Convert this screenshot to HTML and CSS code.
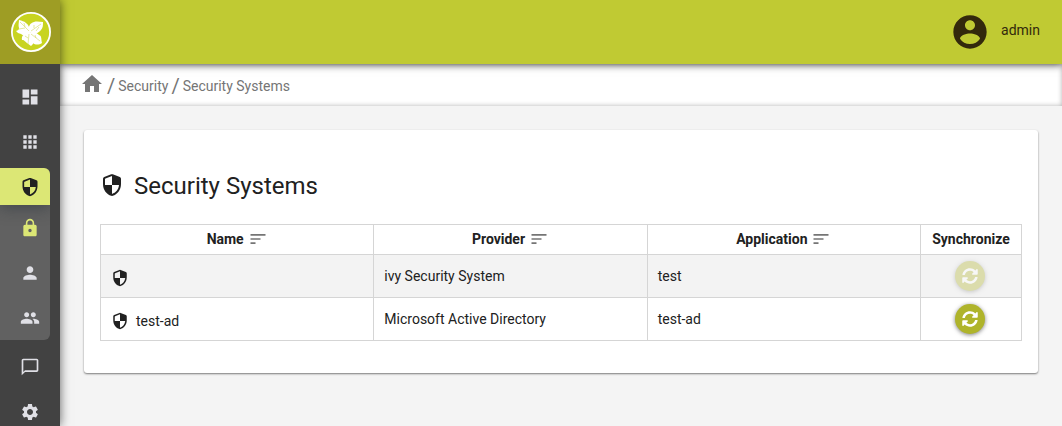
FILE: index.html
```html
<!DOCTYPE html>
<html lang="en">
<head>
<meta charset="utf-8">
<meta name="viewport" content="width=device-width, initial-scale=1">
<title>Security Systems</title>
<link rel="stylesheet" href="styles.css">
</head>
<body>
<svg class="sprite" aria-hidden="true">
  <symbol id="shield" viewBox="0 0 24 24"><path d="M11.200 1.300 4.200 4Q3 4.500 3 5.800V11c0 6 3.800 10.500 8.200 11.800q.8.300 1.600 0C17.200 21.500 21 17 21 11V5.800Q21 4.500 19.800 4L12.800 1.300q-.8-.3-1.600 0zM12 12h7c-.5 4.600-3.200 7.700-7 8.900V12H5V6.300q0-.5.500-.7L12 3.100z"/></symbol>
  <symbol id="sort" viewBox="0 0 24 24"><path d="M3 18h6v-2H3v2zM3 6v2h18V6H3zm0 7h12v-2H3v2z"/></symbol>
  <symbol id="sync" viewBox="0 0 512 512"><path d="M370.720 133.280C339.458 104.008 298.888 87.962 255.848 88c-77.458.068-144.328 53.178-162.791 126.850-1.344 5.363-6.122 9.150-11.651 9.150H24.103c-7.498 0-13.194-6.807-11.807-14.176C33.933 94.924 134.813 8 256 8c66.448 0 126.791 26.136 171.315 68.685L463.030 40.970C478.149 25.851 504 36.559 504 57.941V192c0 13.255-10.745 24-24 24H345.941c-21.382 0-32.090-25.851-16.971-40.971l41.750-41.749zM32 296h134.059c21.382 0 32.090 25.851 16.971 40.971l-41.750 41.750c31.262 29.273 71.835 45.319 114.876 45.280 77.418-.070 144.315-53.144 162.787-126.849 1.344-5.363 6.122-9.150 11.651-9.150h57.304c7.498 0 13.194 6.807 11.807 14.176C478.067 417.076 377.187 504 256 504c-66.448 0-126.791-26.136-171.315-68.685L48.970 471.030C33.851 486.149 8 475.441 8 454.059V320c0-13.255 10.745-24 24-24z"/></symbol>
</svg>
<div class="layout">
  <aside class="sidebar">
    <a class="logo" href="#" aria-label="Start page">
      <svg viewBox="0 0 40 40" aria-hidden="true">
        <circle cx="20" cy="20" r="19.100" fill="#c8d420" stroke="#fff" stroke-width="1.800"/>
        <g fill="#fff">
          <path d="M19 21C16 24 12 24 10 22c-1 0-2-1-3-1l-2-2c2-1 3-1 3-3-1-3 0-5 0-8 3 1 5 1 7 3 3 2 4 6 4 10z"/>
          <path d="M18 20c-1-6 1-9 5-10 3-1 6 0 9 0 0 3 0 6-2 8-3 4-8 5-12 2z"/>
          <path d="M19 21c2-1 7-1 9 2 3 1 2 4 3 8-3 2-7 2-9 0-3-2-4-6-3-10z"/>
          <path d="M20 21c-6 0-10 2-9 7 3 0 3 2 5 3l4 3c4-3 4-8 0-13z"/>
        </g>
        <path d="M9 10l9 9M8 17l6-1M13 11l1 4M20 19l10-7M23 13v3M25 19l3-4M20 22l9 7M24 23l1 3M18 22l-1 10M14 24l3 2" fill="none" stroke="#d8df75" stroke-width=".7"/>
      </svg>
    </a>
    <nav class="nav" aria-label="Main">
      <a class="nav-item" href="#" aria-label="Dashboard"><svg viewBox="0 0 24 24"><path d="M3 13h8V3H3v10zm0 8h8v-6H3v6zm10 0h8V11h-8v10zm0-18v6h8V3h-8z"/></svg></a>
      <a class="nav-item" href="#" aria-label="Applications"><svg viewBox="0 0 24 24"><path d="M4 8h4V4H4v4zm6 12h4v-4h-4v4zm-6 0h4v-4H4v4zm0-6h4v-4H4v4zm6 0h4v-4h-4v4zm6-10v4h4V4h-4zm-6 4h4V4h-4v4zm6 6h4v-4h-4v4zm0 6h4v-4h-4v4z"/></svg></a>
      <div class="group">
        <a class="nav-item active" href="#" aria-label="Security"><svg><use href="#shield"/></svg></a>
        <div class="submenu">
          <a class="nav-item current" href="#" aria-label="Security Systems"><svg viewBox="0 0 24 24"><path d="M18 8h-1V6c0-2.760-2.240-5-5-5S7 3.240 7 6v2H6c-1.100 0-2 .9-2 2v10c0 1.100.9 2 2 2h12c1.100 0 2-.9 2-2V10c0-1.100-.9-2-2-2zm-6 9c-1.100 0-2-.9-2-2s.9-2 2-2 2 .9 2 2-.9 2-2 2zm3.100-9H8.900V6c0-1.710 1.390-3.100 3.100-3.100s3.100 1.390 3.100 3.100v2z"/></svg></a>
          <a class="nav-item" href="#" aria-label="Users"><svg viewBox="0 0 24 24"><path d="M12 12c2.210 0 4-1.790 4-4s-1.790-4-4-4-4 1.790-4 4 1.790 4 4 4zm0 2c-2.670 0-8 1.340-8 4v2h16v-2c0-2.660-5.330-4-8-4z"/></svg></a>
          <a class="nav-item" href="#" aria-label="Roles"><svg viewBox="0 0 24 24"><path d="M16 11c1.660 0 2.990-1.340 2.990-3S17.660 5 16 5s-3 1.340-3 3 1.340 3 3 3zm-8 0c1.660 0 2.990-1.340 2.990-3S9.660 5 8 5 5 6.340 5 8s1.340 3 3 3zm0 2c-2.330 0-7 1.170-7 3.500V19h14v-2.500c0-2.330-4.670-3.500-7-3.500zm8 0c-.29 0-.62.020-.97.050 1.160.84 1.970 1.970 1.970 3.450V19h6v-2.500c0-2.330-4.670-3.500-7-3.500z"/></svg></a>
        </div>
      </div>
      <a class="nav-item" href="#" aria-label="Notifications"><svg viewBox="0 0 24 24"><path d="M20 2H4c-1.100 0-2 .9-2 2v18l4-4h14c1.100 0 2-.9 2-2V4c0-1.100-.9-2-2-2zm0 14H6l-2 2V4h16v12z"/></svg></a>
      <a class="nav-item" href="#" aria-label="System"><svg viewBox="0 0 24 24"><path d="M19.140 12.940c.04-.3.060-.61.060-.94 0-.32-.02-.64-.07-.94l2.030-1.580c.18-.14.230-.41.120-.61l-1.920-3.320c-.12-.22-.37-.29-.59-.22l-2.390.96c-.5-.38-1.030-.7-1.620-.94l-.36-2.540c-.04-.24-.24-.41-.48-.41h-3.840c-.24 0-.43.17-.47.41l-.36 2.540c-.59.24-1.130.57-1.620.94l-2.390-.96c-.22-.08-.47 0-.59.22L2.740 8.870c-.12.21-.08.47.12.610l2.030 1.580c-.05.3-.09.63-.09.94s.02.64.07.94l-2.030 1.580c-.18.14-.23.41-.12.610l1.920 3.320c.12.22.37.29.59.22l2.390-.96c.5.38 1.030.7 1.620.94l.36 2.540c.05.24.24.41.48.41h3.840c.24 0 .44-.17.470-.41l.36-2.540c.59-.24 1.130-.56 1.620-.94l2.390.96c.22.08.47 0 .59-.22l1.920-3.320c.12-.22.07-.47-.12-.61l-2.010-1.580zM12 15.600c-1.980 0-3.600-1.620-3.600-3.600s1.620-3.600 3.600-3.600 3.600 1.620 3.600 3.600-1.620 3.600-3.600 3.600z"/></svg></a>
    </nav>
  </aside>
  <div class="content">
    <header class="topbar">
      <a class="profile" href="#">
        <svg viewBox="0 0 24 24" aria-hidden="true"><path d="M12 2C6.480 2 2 6.480 2 12s4.480 10 10 10 10-4.480 10-10S17.520 2 12 2zm0 3c1.660 0 3 1.340 3 3s-1.340 3-3 3-3-1.340-3-3 1.340-3 3-3zm0 14.200c-2.500 0-4.710-1.280-6-3.220.03-1.990 4-3.080 6-3.080 1.990 0 5.970 1.090 6 3.080-1.290 1.940-3.500 3.220-6 3.220z"/></svg>
        <span>admin</span>
      </a>
    </header>
    <nav class="breadcrumb" aria-label="Breadcrumb">
      <a class="home" href="#" aria-label="Home"><svg viewBox="0 0 24 24"><path d="M10 20v-6h4v6h5v-8h3L12 3 2 12h3v8z"/></svg></a>
      <span class="slash">/</span>
      <a href="#">Security</a>
      <span class="slash">/</span>
      <a href="#">Security Systems</a>
    </nav>
    <main class="main">
      <section class="card">
        <h1 class="title"><svg aria-hidden="true"><use href="#shield"/></svg><span>Security Systems</span></h1>
        <table class="systems">
          <thead>
            <tr>
              <th><button class="sort" type="button">Name<svg><use href="#sort"/></svg></button></th>
              <th><button class="sort" type="button">Provider<svg><use href="#sort"/></svg></button></th>
              <th><button class="sort" type="button">Application<svg><use href="#sort"/></svg></button></th>
              <th class="sync-col">Synchronize</th>
            </tr>
          </thead>
          <tbody>
            <tr>
              <td><a class="system" href="#" aria-label="Default security system"><svg><use href="#shield"/></svg></a></td>
              <td>ivy Security System</td>
              <td>test</td>
              <td class="sync-cell"><button class="sync" type="button" aria-label="Synchronize" disabled><svg><use href="#sync"/></svg></button></td>
            </tr>
            <tr>
              <td><a class="system" href="#"><svg><use href="#shield"/></svg><span>test-ad</span></a></td>
              <td>Microsoft Active Directory</td>
              <td>test-ad</td>
              <td class="sync-cell"><button class="sync" type="button" aria-label="Synchronize test-ad"><svg><use href="#sync"/></svg></button></td>
            </tr>
          </tbody>
        </table>
      </section>
    </main>
  </div>
</div>
</body>
</html>
```
FILE: styles.css
```css
* { box-sizing: border-box; }
body {
  margin: 0;
  background: #f4f4f4;
  color: #212121;
  font: 14px/20px Roboto, sans-serif;
}
a { color: inherit; text-decoration: none; }
svg { display: block; fill: currentColor; flex: none; }
.sprite { display: none; }

.layout { display: flex; height: 100vh; overflow: hidden; }

.sidebar {
  flex: none;
  width: 60px;
  background: #424242;
  box-shadow: 0 0 10px rgba(0, 0, 0, .6);
  z-index: 2;
}
.logo {
  display: grid;
  place-items: center;
  height: 64px;
  padding-left: 2px;
  background: #9e9d24;
}
.logo svg { width: 40px; height: 40px; }
.nav { display: flex; flex-direction: column; padding-top: 10px; color: #e0e0e6; }
.nav-item { display: flex; align-items: center; height: 45px; padding-left: 20px; }
.nav-item svg { width: 20px; height: 20px; }
.group {
  width: 50px;
  margin: 4px 0;
  background: #616161;
  border-radius: 0 6px 6px 0;
  overflow: hidden;
}
.active {
  height: 37px;
  background: #dce775;
  color: #212121;
  box-shadow: 0 2px 16px rgba(30, 40, 50, .5);
}
.current { color: #dce775; }

.content { flex: 1; min-width: 0; display: flex; flex-direction: column; }
.topbar {
  display: flex;
  flex: none;
  justify-content: flex-end;
  height: 64px;
  padding-right: 22px;
  background: #c0ca33;
  box-shadow: 0 1px 8px rgba(0, 0, 0, .6);
  z-index: 1;
}
.profile { display: flex; align-items: center; gap: 11px; color: #33290c; }
.profile svg { width: 40px; height: 40px; }
.profile span { padding-bottom: 4px; }
.breadcrumb {
  display: flex;
  flex: none;
  align-items: center;
  gap: 3px;
  height: 42px;
  padding: 2px 20px 0;
  background: #fff;
  box-shadow: inset 0 0 5px rgba(0, 0, 0, .3);
  color: #757575;
}
.home { padding-bottom: 4px; }
.home svg { width: 24px; height: 24px; }
.slash { font-size: 20px; }
.main { padding: 24px; }
.card {
  padding: 40px 16px 32px;
  background: #fff;
  border-radius: 3px;
  box-shadow: 0 1px 2px rgba(0, 0, 0, .5);
}
.title {
  display: flex;
  align-items: center;
  gap: 10px;
  margin: 0 0 22px;
  font-size: 24px;
  font-weight: 400;
  line-height: 32px;
}
.title svg { width: 24px; height: 24px; margin-bottom: 2px; }
.systems { width: 100%; border-collapse: collapse; table-layout: fixed; }
.systems th, .systems td { border: 1px solid #d5d5d5; }
.systems th { height: 30px; padding: 0 0 2px; font-weight: 700; }
.systems td { height: 43px; padding: 0 10px; }
.systems tbody tr:nth-child(odd) { background: #f3f3f3; }
.sync-col { width: 101px; }
.sort {
  display: inline-flex;
  align-items: center;
  gap: 4px;
  padding: 0;
  border: 0;
  background: none;
  color: inherit;
  font: inherit;
  cursor: pointer;
}
.sort svg { width: 20px; height: 20px; color: #757575; }
.system { display: flex; align-items: center; gap: 7px; padding-top: 3px; }
.system svg { width: 18px; height: 18px; }
.systems .sync-cell { padding: 0 2px 0 0; }
.sync {
  display: grid;
  place-items: center;
  width: 30px;
  height: 30px;
  margin: 0 auto;
  padding: 0;
  border: 0;
  border-radius: 50%;
  background: #afb42b;
  color: #fff;
  box-shadow: 0 1px 4px rgba(0, 0, 0, .5);
  cursor: pointer;
}
.sync svg { width: 16px; height: 16px; }
.sync:disabled { opacity: .35; cursor: default; }
```
